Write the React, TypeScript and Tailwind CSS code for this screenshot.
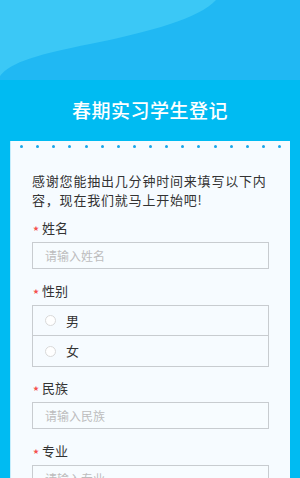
const font = { fontFamily: "'Noto Sans CJK SC', 'Noto Sans', sans-serif" };

function Label({ text }: { text: string }) {
  return (
    <div className="flex items-center h-5 text-[13px] text-[#333]">
      <span className="text-[#f5504f] text-[6px] w-[10px] leading-none pl-[1px]">★</span>
      <span>{text}</span>
    </div>
  );
}

function Input({ placeholder }: { placeholder: string }) {
  return (
    <div className="mt-[4px] h-[27px] border border-[#c8ccd0] bg-[#f7fcff] flex items-center pl-[12px] text-[12px] text-[#bdbdbd]">
      {placeholder}
    </div>
  );
}

function Radio({ text, last }: { text: string; last?: boolean }) {
  return (
    <div className={`h-[30px] flex items-center pl-[12px] text-[13px] text-[#333] ${last ? '' : 'border-b border-[#c8ccd0]'}`}>
      <span className="w-[11px] h-[11px] rounded-full border border-[#d9d9d9] bg-white mr-[10px]" />
      <span>{text}</span>
    </div>
  );
}

export default function App() {
  const dots = Array.from({ length: 17 });
  return (
    <div className="w-[300px] h-[478px] overflow-hidden bg-[#00bbf2]" style={font}>
      {/* Header with wave */}
      <div className="relative h-[80px] bg-[#20b8f3]">
        <svg className="absolute inset-0" width="300" height="80" viewBox="0 0 300 80">
          <path d="M0,0 H216 C200,18 150,32 90,44 C40,54 10,62 0,76 Z" fill="#3bc8f6" />
        </svg>
      </div>

      <div className="h-[61px] flex items-center justify-center text-white text-[19px] font-medium tracking-[0.5px]">
        春期实习学生登记
      </div>

      {/* Card */}
      <div className="mx-[10px] bg-[#f6fbff] border-l border-[#c6edfc] h-[400px]">
        <div className="flex justify-between px-[9px] pt-[4px]">
          {dots.map((_, i) => (
            <span key={i} className="w-[3px] h-[3px] rounded-full bg-[#18a6ea]" />
          ))}
        </div>

        <div className="px-[21px]">
          <p className="mt-[23px] text-[13px] leading-[19px] text-[#333] tracking-[0.8px]">
            感谢您能抽出几分钟时间来填写以下内容，现在我们就马上开始吧!
          </p>

          <div className="mt-[9px]">
            <Label text="姓名" />
            <Input placeholder="请输入姓名" />
          </div>

          <div className="mt-[12px]">
            <Label text="性别" />
            <div className="mt-[4px] border border-[#c8ccd0]">
              <Radio text="男" />
              <Radio text="女" last />
            </div>
          </div>

          <div className="mt-[11px]">
            <Label text="民族" />
            <Input placeholder="请输入民族" />
          </div>

          <div className="mt-[12px]">
            <Label text="专业" />
            <Input placeholder="请输入专业" />
          </div>
        </div>
      </div>
    </div>
  );
}
